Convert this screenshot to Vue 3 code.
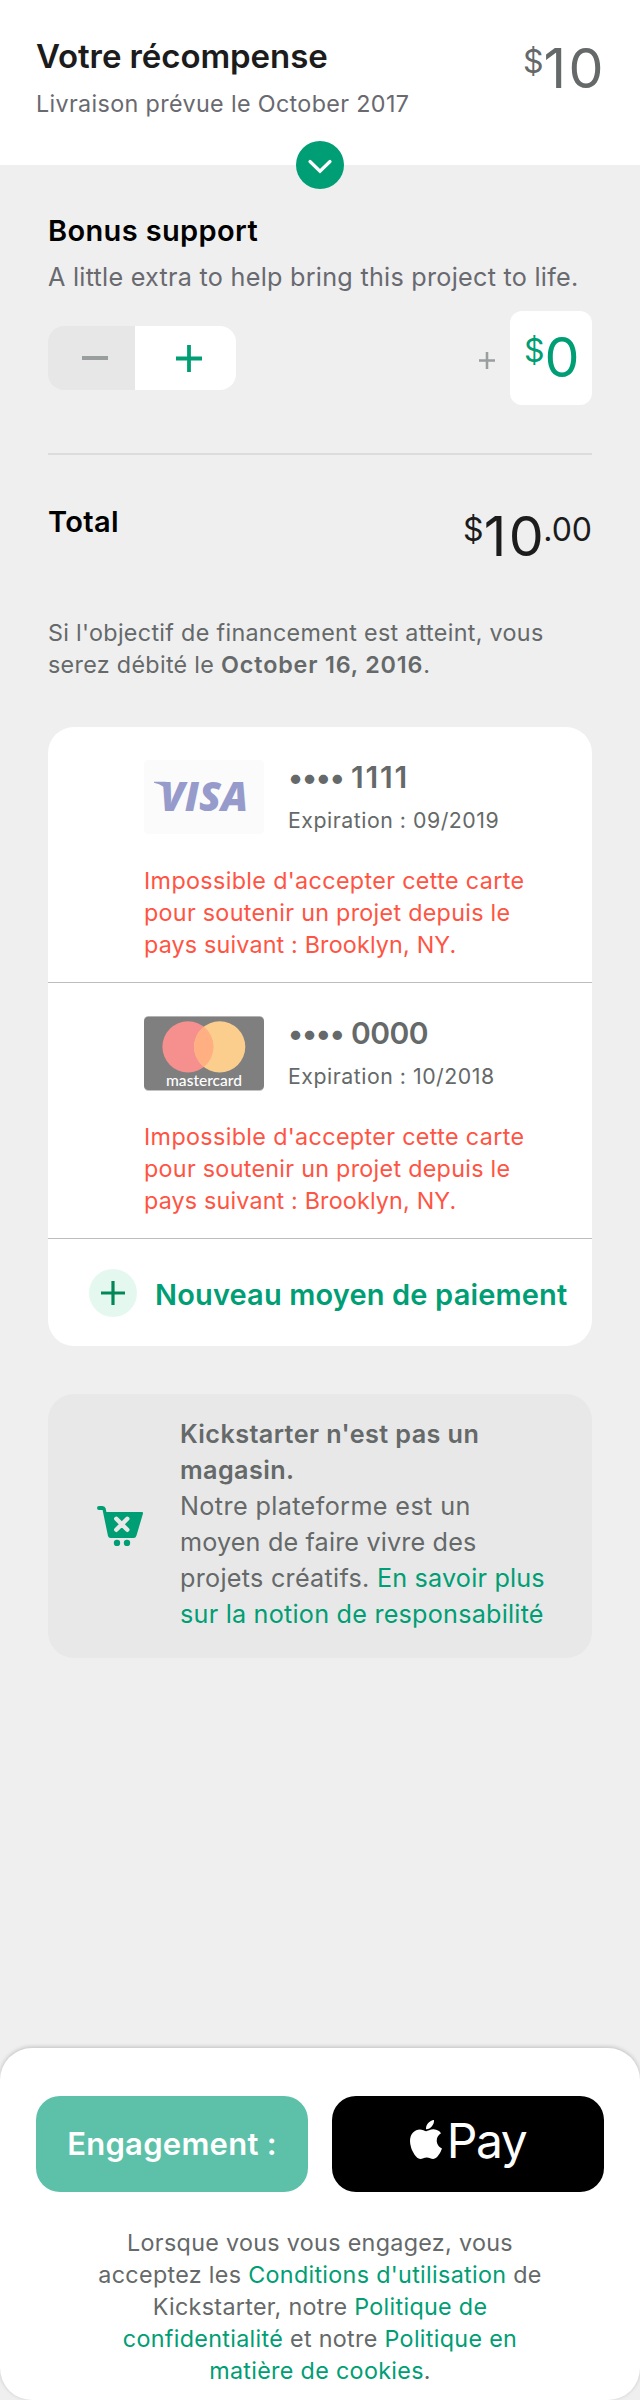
<script setup>
const cards = [
  {
    brand: 'visa',
    last: '1111',
    spacing: '1.8px',
    expiry: 'Expiration : 09/2019',
  },
  {
    brand: 'mastercard',
    last: '0000',
    spacing: '-0.5px',
    expiry: 'Expiration : 10/2018',
  },
]

const errorLines = [
  { text: "Impossible d'accepter cette carte", spacing: '0.36px' },
  { text: 'pour soutenir un projet depuis le', spacing: '0.29px' },
  { text: 'pays suivant : Brooklyn, NY.', spacing: '0.17px' },
]

const noticeLines = [
  [{ text: "Kickstarter n'est pas un", kind: 'strong', spacing: '0.41px' }],
  [{ text: 'magasin.', kind: 'strong', spacing: '0.4px' }],
  [{ text: 'Notre plateforme est un', kind: 'plain', spacing: '0.38px' }],
  [{ text: 'moyen de faire vivre des', kind: 'plain', spacing: '0.15px' }],
  [
    { text: 'projets créatifs. ', kind: 'plain', spacing: '0.27px' },
    { text: 'En savoir plus', kind: 'link', spacing: '0.19px' },
  ],
  [{ text: 'sur la notion de responsabilité', kind: 'link', spacing: '0.22px' }],
]

const legalLines = [
  [{ text: 'Lorsque vous vous engagez, vous', kind: 'plain' }],
  [
    { text: 'acceptez les ', kind: 'plain' },
    { text: "Conditions d'utilisation", kind: 'link' },
    { text: ' de', kind: 'plain' },
  ],
  [
    { text: 'Kickstarter, notre ', kind: 'plain' },
    { text: 'Politique de', kind: 'link' },
  ],
  [
    { text: 'confidentialité', kind: 'link' },
    { text: ' et notre ', kind: 'plain' },
    { text: 'Politique en', kind: 'link' },
  ],
  [
    { text: 'matière de cookies', kind: 'link' },
    { text: '.', kind: 'plain' },
  ],
]
</script>

<template>
  <div class="page">
    <header class="reward">
      <div>
        <h1 class="reward-title">Votre récompense</h1>
        <p class="reward-sub">Livraison prévue le October 2017</p>
      </div>
      <div class="amount muted"><span class="cur">$</span><span class="whole">10</span></div>
      <button class="toggle" aria-label="Afficher">
        <svg width="48" height="48" viewBox="0 0 48 48">
          <path d="M14 20.5 24 30.2 34 20.5" fill="none" stroke="#fff" stroke-width="3.2" stroke-linecap="round" />
        </svg>
      </button>
    </header>

    <main class="content">
      <h2 class="section-title">Bonus support</h2>
      <p class="bonus-sub">A little extra to help bring this project to life.</p>
      <div class="bonus-row">
        <div class="stepper">
          <button class="step minus" aria-label="Moins">
            <svg width="26" height="4"><rect width="26" height="4" fill="#9b9e9e" /></svg>
          </button>
          <button class="step plus" aria-label="Plus">
            <svg width="26" height="27" viewBox="0 0 26 27">
              <path d="M0 13.5H26M13 0V27" stroke="#009e74" stroke-width="3.8" />
            </svg>
          </button>
        </div>
        <div class="bonus-value">
          <svg class="small-plus" width="16" height="17" viewBox="0 0 16 17">
            <path d="M0 8.5H16M8 0V17" stroke="#9b9e9e" stroke-width="2.6" />
          </svg>
          <div class="value-box">
            <div class="amount green"><span class="cur">$</span><span class="whole">0</span></div>
          </div>
        </div>
      </div>

      <div class="total-row">
        <h2 class="section-title">Total</h2>
        <div class="amount dark"><span class="cur">$</span><span class="whole">10</span><span class="cents">.00</span></div>
      </div>

      <p class="charge">
        Si l'objectif de financement est atteint, vous<br />serez débité le
        <b>October 16, 2016</b>.
      </p>

      <section class="methods">
        <article v-for="card in cards" :key="card.brand" class="method">
          <div class="method-head">
            <svg v-if="card.brand === 'visa'" width="120" height="75" viewBox="0 0 120 75">
              <rect width="120" height="74" rx="4" fill="#fbfbfb" />
              <path d="M10 21.8H22L25 34Q21 25 10 22.8Z" fill="#969bcb" />
              <text x="16" y="51.3" class="visa" textLength="88" lengthAdjust="spacingAndGlyphs">VISA</text>
            </svg>
            <svg v-else width="120" height="75" viewBox="0 0 120 75">
              <rect width="120" height="75" rx="4.5" fill="#c4c4c4" />
              <rect y="0.7" width="120" height="73.4" rx="4.5" fill="#7f7f7f" />
              <circle cx="44" cy="30.8" r="25.6" fill="#f5908e" />
              <circle cx="75.7" cy="30.8" r="25.6" fill="#fbce8e" />
              <path d="M59.85 10.7A25.6 25.6 0 0 1 59.85 50.9A25.6 25.6 0 0 1 59.85 10.7Z" fill="#ffaf81" />
              <text x="22" y="70" class="mc" textLength="76" lengthAdjust="spacingAndGlyphs">mastercard</text>
            </svg>
            <div class="method-info">
              <p class="number"><span class="dots">••••</span><span :style="{ letterSpacing: card.spacing }">{{ card.last }}</span></p>
              <p class="expiry">{{ card.expiry }}</p>
            </div>
          </div>
          <div class="error">
            <div v-for="l in errorLines" :key="l.text" :style="{ letterSpacing: l.spacing }">{{ l.text }}</div>
          </div>
        </article>
        <div class="add">
          <span class="add-icon">
            <svg width="24" height="24" viewBox="0 0 24 24">
              <path d="M0 12H24M12 0V24" stroke="#028858" stroke-width="3.2" />
            </svg>
          </span>
          <span class="add-label">Nouveau moyen de paiement</span>
        </div>
      </section>

      <section class="notice">
        <svg class="cart" width="46" height="40" viewBox="0 0 46 40">
          <path d="M2 0H5.5Q8 0 8.7 2.5L9.4 6H45Q46.3 6 46 7.5L39.5 29.5Q38.8 32 36.5 32H13.5Q11.5 32 11 30L5.6 4H2A2 2 0 0 1 2 0Z" fill="#009e74" />
          <path d="M19.3 12.8 30.3 23.8M30.3 12.8 19.3 23.8" stroke="#e8e8e8" stroke-width="4.4" stroke-linecap="round" />
          <circle cx="20" cy="37" r="3.2" fill="#009e74" />
          <circle cx="30" cy="37" r="3.2" fill="#009e74" />
        </svg>
        <div class="notice-text">
          <div v-for="(line, i) in noticeLines" :key="i"><span v-for="p in line" :key="p.text" :class="p.kind" :style="{ letterSpacing: p.spacing }">{{ p.text }}</span></div>
        </div>
      </section>
    </main>

    <footer class="sheet">
      <div class="buttons">
        <button class="btn pledge">Engagement :</button>
        <button class="btn apple">
          <svg width="32" height="39" viewBox="4 32 376.5 448" preserveAspectRatio="none">
            <path fill="#fff" d="M318.7 268.7c-.2-36.7 16.4-64.4 50-84.8-18.8-26.9-47.2-41.7-84.7-44.6-35.5-2.8-74.3 20.7-88.5 20.7-15 0-49.4-19.7-76.4-19.7C63.3 141.2 4 184.8 4 273.5q0 39.3 14.4 81.2c12.8 36.7 59 126.7 107.2 125.2 25.2-.6 43-17.9 75.8-17.9 31.8 0 48.3 17.9 76.4 17.9 48.6-.7 90.4-82.5 102.6-119.3-65.2-30.7-61.7-90-61.7-91.9zm-56.6-164.2c27.3-32.4 24.8-61.9 24-72.5-24.1 1.4-52 16.4-67.9 34.9-17.5 19.8-27.8 44.3-25.6 71.9 26.1 2 49.9-11.4 69.5-34.3z" />
          </svg>
          <span class="pay">Pay</span>
        </button>
      </div>
      <div class="legal">
        <div v-for="(line, i) in legalLines" :key="i"><span v-for="p in line" :key="p.text" :class="p.kind">{{ p.text }}</span></div>
      </div>
    </footer>
  </div>
</template>

<style>
body {
  margin: 0;
  background: #efefef;
}
</style>

<style scoped>
.page {
  display: flex;
  flex-direction: column;
  width: 640px;
  height: 2400px;
  overflow: hidden;
  background: #efefef;
  font-family: Inter, "Liberation Sans", sans-serif;
  white-space: nowrap;
}
h1,
h2,
p {
  margin: 0;
}
button {
  border: 0;
  padding: 0;
  font-family: inherit;
}
svg {
  display: block;
  flex: none;
}
.reward {
  position: relative;
  box-sizing: border-box;
  height: 165px;
  padding: 36px 34px 0 36px;
  display: flex;
  justify-content: space-between;
  background: #fff;
}
.reward-title {
  font-size: 33px;
  line-height: 40px;
  font-weight: 600;
  letter-spacing: -0.08px;
  color: #1c1c1d;
}
.reward-sub {
  margin-top: 12px;
  font-size: 23.3px;
  line-height: 32px;
  letter-spacing: 0.36px;
  color: #696970;
}
.toggle {
  position: absolute;
  left: 296px;
  bottom: -24px;
  width: 48px;
  height: 48px;
  border-radius: 50%;
  background: #009e74;
}
.amount {
  display: flex;
  align-items: flex-start;
}
.cur,
.cents {
  margin-top: 6px;
  font-size: 32px;
  line-height: 40px;
}
.whole {
  font-size: 55.5px;
  line-height: 64px;
  letter-spacing: 2.5px;
}
.cents {
  margin-left: -3px;
}
.muted {
  color: #656969;
}
.green {
  color: #009e74;
}
.dark {
  color: #1c1c1d;
}
.content {
  padding: 48px 48px 0;
  flex: 1;
}
.section-title {
  font-size: 29px;
  line-height: 36px;
  font-weight: 600;
  letter-spacing: 0.36px;
  color: #000;
}
.bonus-sub {
  margin-top: 12px;
  font-size: 25.2px;
  line-height: 32px;
  letter-spacing: 0.26px;
  color: #696970;
}
.bonus-row {
  display: flex;
  justify-content: space-between;
  align-items: center;
  height: 94px;
  margin-top: 18px;
  padding-bottom: 48px;
  border-bottom: 2px solid #dcdcdc;
}
.stepper {
  display: flex;
  width: 188px;
  height: 64px;
  border-radius: 16px;
  overflow: hidden;
}
.step {
  display: flex;
  align-items: center;
}
.minus {
  width: 87px;
  padding-left: 34px;
  background: #e7e7e7;
}
.plus {
  width: 101px;
  padding-left: 41px;
  background: #fff;
}
.bonus-value {
  display: flex;
  align-items: center;
}
.small-plus {
  margin: 5px 15px 0 0;
}
.value-box {
  box-sizing: border-box;
  width: 82px;
  height: 94px;
  padding: 14px 0 0 14px;
  border-radius: 12px;
  background: #fff;
}
.total-row {
  display: flex;
  justify-content: space-between;
  height: 64px;
  margin-top: 49px;
}
.charge {
  margin-top: 49px;
  font-size: 23.3px;
  line-height: 32px;
  letter-spacing: 0.32px;
  color: #656969;
}
.charge b {
  font-weight: 600;
  letter-spacing: 0.85px;
}
.methods {
  margin-top: 46px;
  border-radius: 26px;
  overflow: hidden;
  background: #fff;
}
.method {
  height: 222px;
  padding: 33px 0 0 96px;
  border-bottom: 1px solid #bdbdbd;
}
.method-head {
  display: flex;
  height: 75px;
}
.method-info {
  margin: -1px 0 0 24px;
  color: #656969;
}
.number {
  display: flex;
  font-size: 30px;
  line-height: 36px;
  font-weight: 600;
}
.dots {
  width: 63px;
  letter-spacing: -1.2px;
}
.expiry {
  margin-top: 11px;
  font-size: 21.3px;
  line-height: 28px;
  letter-spacing: 0.52px;
}
.visa {
  font: italic 800 41px "Open Sans", "Noto Sans", sans-serif;
  fill: #969bcb;
}
.mc {
  font: 500 15.5px Lato, sans-serif;
  fill: #fff;
}
.error {
  margin-top: 30px;
  font-size: 23.3px;
  line-height: 32px;
  color: #ff5443;
}
.add {
  display: flex;
  align-items: center;
  height: 107px;
  padding-left: 41px;
}
.add-icon {
  display: flex;
  align-items: center;
  justify-content: center;
  width: 48px;
  height: 48px;
  border-radius: 50%;
  background: #e5f8f0;
}
.add-label {
  padding-top: 4px;
  margin-left: 18px;
  font-size: 29px;
  line-height: 36px;
  font-weight: 600;
  letter-spacing: 0.15px;
  color: #009e74;
}
.notice {
  box-sizing: border-box;
  display: flex;
  height: 264px;
  margin-top: 48px;
  padding: 22px 0 0 49px;
  border-radius: 26px;
  background: #e8e8e8;
}
.cart {
  margin-top: 90px;
}
.notice-text {
  margin-left: 37px;
  font-size: 25.2px;
  line-height: 36px;
}
.plain {
  color: #656969;
  white-space: pre;
}
.strong {
  color: #656969;
  font-weight: 600;
}
.link {
  color: #009e74;
}
.sheet {
  box-sizing: border-box;
  height: 352px;
  padding: 48px 36px 0;
  border-radius: 32px;
  background: #fff;
  box-shadow: 0 -1px 4px rgba(0, 0, 0, 0.2);
}
.buttons {
  display: flex;
  gap: 24px;
}
.btn {
  box-sizing: border-box;
  display: flex;
  align-items: center;
  justify-content: center;
  width: 272px;
  height: 96px;
  border-radius: 24px;
}
.pledge {
  padding-bottom: 2px;
  background: #5dc1a9;
  color: #fff;
  font-size: 31px;
  font-weight: 600;
  letter-spacing: 0.26px;
}
.apple {
  background: #000;
  color: #fff;
}
.apple svg {
  margin: -9px 5px 0 0;
}
.pay {
  margin-top: -6px;
  font-size: 48px;
  line-height: 60px;
  letter-spacing: -1.45px;
}
.legal {
  margin-top: 35px;
  text-align: center;
  font-size: 23.3px;
  line-height: 32px;
  letter-spacing: 0.32px;
}
</style>
